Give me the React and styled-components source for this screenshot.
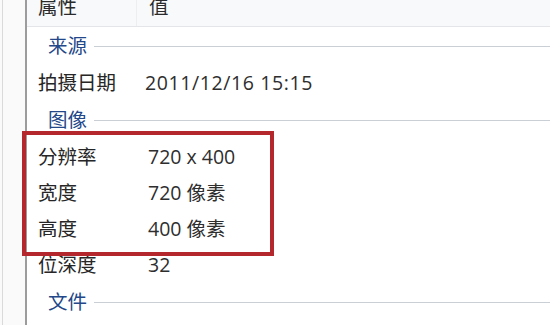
import React from 'react';
import styled, { createGlobalStyle } from 'styled-components';

const GlobalStyle = createGlobalStyle`
  html, body {
    margin: 0;
    padding: 0;
    background: #fff;
  }
  body {
    font-family: "Open Sans", "Noto Sans CJK SC", sans-serif;
    font-size: 19.5px;
    color: #2a2a2a;
  }
`;

const Page = styled.div`
  display: flex;
  width: 550px;
  height: 325px;
  overflow: hidden;
`;

const Gutter = styled.div`
  width: 25px;
  flex-shrink: 0;
  border-right: 2px solid #9c9c9c;
  background: linear-gradient(to right, #fafafa 2px, #dadada 2px 3px, #fafafa 3px);
`;

const Main = styled.div`
  flex: 1;
  display: flex;
  flex-direction: column;
`;

const Header = styled.div`
  display: flex;
  height: 26px;
  background: #f8f9fa;
  border-bottom: 1px solid #e3e5e8;
  overflow: hidden;
`;

const HeaderCell = styled.div`
  display: flex;
  align-items: center;
  box-sizing: border-box;
  padding: 0 0 12px ${p => (p.$first ? 11 : 12)}px;
  width: ${p => (p.$first ? '109px' : 'auto')};
  flex: ${p => (p.$first ? 'none' : 1)};
  border-left: ${p => (p.$first ? 'none' : '1px solid #eceef0')};
  line-height: 20px;
  color: #2a2a2a;
`;

const Group = styled.div`
  display: flex;
  align-items: center;
  height: 38px;
  padding-left: 21px;
  color: #234789;
  line-height: 20px;
`;

const GroupLine = styled.div`
  flex: 1;
  height: 1px;
  margin-left: 7px;
  background: #c9cfd5;
`;

const Row = styled.div`
  display: flex;
  align-items: center;
  height: 36px;
  line-height: 20px;
`;

const Name = styled.div`
  width: 109px;
  flex-shrink: 0;
  box-sizing: border-box;
  padding-left: 11px;
  color: #262626;
`;

const Value = styled.div`
  flex: 1;
  padding-left: ${p => (p.$wide ? 9 : 12)}px;
  letter-spacing: ${p => (p.$wide ? '0.6px' : 'normal')};
  color: #2e2e2e;
`;

const Marked = styled.div`
  position: relative;
`;

const Highlight = styled.div`
  position: absolute;
  left: -5px;
  top: -8px;
  width: 252px;
  bottom: -9px;
  box-sizing: border-box;
  border: 4px solid #b3272d;
  pointer-events: none;
`;

const SectionTitle = ({ children }) => (
  <Group>
    {children}
    <GroupLine />
  </Group>
);

const Prop = ({ name, value, wide }) => (
  <Row>
    <Name>{name}</Name>
    <Value $wide={wide}>{value}</Value>
  </Row>
);

export default function App() {
  return (
    <>
      <GlobalStyle />
      <Page>
        <Gutter />
        <Main>
          <Header>
            <HeaderCell $first>属性</HeaderCell>
            <HeaderCell>值</HeaderCell>
          </Header>
          <SectionTitle>来源</SectionTitle>
          <Prop name="拍摄日期" value="2011/12/16 15:15" wide />
          <SectionTitle>图像</SectionTitle>
          <Marked>
            <Prop name="分辨率" value="720 x 400" />
            <Prop name="宽度" value="720 像素" />
            <Prop name="高度" value="400 像素" />
            <Highlight />
          </Marked>
          <Prop name="位深度" value="32" />
          <SectionTitle>文件</SectionTitle>
        </Main>
      </Page>
    </>
  );
}
